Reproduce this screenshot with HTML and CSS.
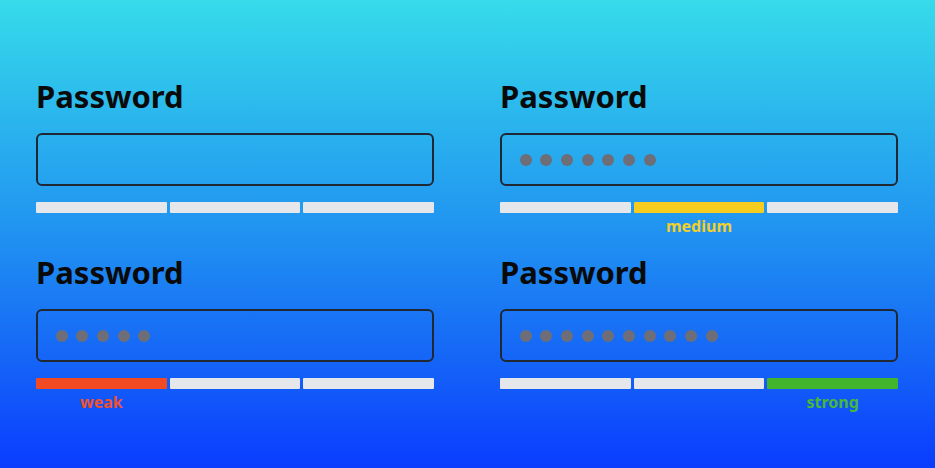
FILE: index.html
```html
<!DOCTYPE html>
<html>
<head>
    <meta charset="utf-8">
    <link rel="stylesheet" href="styles.css">
</head>
<body>
<div class="panel">
    <div class="field">
        <div class="label">Password</div>
        <div class="box"></div>
        <div class="meter">
            <div class="bar"></div>
            <div class="bar"></div>
            <div class="bar"></div>
        </div>
    </div>

    <div class="field">
        <div class="label">Password</div>
        <div class="box">
            <span class="dot"></span><span class="dot"></span><span class="dot"></span>
            <span class="dot"></span><span class="dot"></span><span class="dot"></span>
            <span class="dot"></span>
        </div>
        <div class="meter">
            <div class="bar"></div>
            <div class="bar medium"></div>
            <div class="bar"></div>
            <div class="status medium">medium</div>
        </div>
    </div>

    <div class="field">
        <div class="label">Password</div>
        <div class="box">
            <span class="dot"></span><span class="dot"></span><span class="dot"></span>
            <span class="dot"></span><span class="dot"></span>
        </div>
        <div class="meter">
            <div class="bar weak"></div>
            <div class="bar"></div>
            <div class="bar"></div>
            <div class="status weak">weak</div>
        </div>
    </div>

    <div class="field">
        <div class="label">Password</div>
        <div class="box">
            <span class="dot"></span><span class="dot"></span><span class="dot"></span>
            <span class="dot"></span><span class="dot"></span><span class="dot"></span>
            <span class="dot"></span><span class="dot"></span><span class="dot"></span>
            <span class="dot"></span>
        </div>
        <div class="meter">
            <div class="bar"></div>
            <div class="bar"></div>
            <div class="bar strong"></div>
            <div class="status strong">strong</div>
        </div>
    </div>
</div>
</body>
</html>
```

FILE: styles.css
```css
html, body {
    margin: 0;
    height: 100%;
}

body {
    background: linear-gradient(to bottom, #36dbea 0%, #2bb6ed 25%, #2092f1 50%, #1668f6 75%, #0a3cff 100%);
    font-family: "Noto Sans", "Open Sans", sans-serif;
    overflow: hidden;
}

.panel {
    display: grid;
    grid-template-columns: 398px 398px;
    column-gap: 66px;
    row-gap: 13px;
    padding: 76px 0 0 36px;
}

.field {
    display: flex;
    flex-direction: column;
}

.label {
    font-size: 31px;
    font-weight: bold;
    line-height: 40px;
    color: #0a0a0a;
}

.box {
    margin-top: 17px;
    height: 49px;
    border: 2px solid #1f2833;
    border-radius: 6px;
    display: flex;
    align-items: center;
    gap: 8.7px;
    padding-left: 17.5px;
}

.dot {
    width: 12px;
    height: 12px;
    border-radius: 50%;
    background-color: #6d6e78;
}

.meter {
    margin-top: 16px;
    display: grid;
    grid-template-columns: 1fr 1fr 1fr;
    grid-template-rows: 11px 26px;
    column-gap: 3px;
}

.bar {
    background-color: #e5e7ea;
    border-radius: 1px;
}

.bar.weak { background-color: #f24a22; }
.bar.medium { background-color: #f6cd1f; }
.bar.strong { background-color: #42b52c; }

.status {
    grid-row: 2;
    text-align: center;
    font-size: 16px;
    font-weight: bold;
    line-height: 24px;
    padding-top: 1px;
}

.status.weak { grid-column: 1; color: #f0522c; }
.status.medium { grid-column: 2; color: #f2cf2a; }
.status.strong { grid-column: 3; color: #46b83a; }
```
